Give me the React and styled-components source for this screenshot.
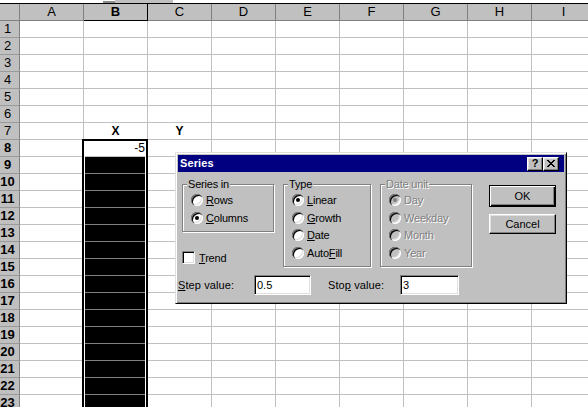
import React from 'react';
import styled, { createGlobalStyle } from 'styled-components';

const GlobalStyle = createGlobalStyle`
  html, body { margin: 0; padding: 0; background: #fff; }
  body { width: 588px; height: 407px; overflow: hidden; font-family: "Liberation Sans", Arial, sans-serif; }
`;

const SANS = '"Liberation Sans", Arial, sans-serif';

const Screen = styled.div`
  position: relative;
  width: 588px;
  height: 407px;
  overflow: hidden;
  background: #fff;
`;

const TopStrip = styled.div`
  height: 3px;
  border-bottom: 1px solid #000;
  display: flex;
  padding-left: 103px;
`;

const StripTab = styled.div`
  width: 70px;
  height: 3px;
  background: #c0c0c0;
  display: flex;
`;

const StripTabDark = styled.div`
  width: 12px;
  background: #8c8c8c;
  border-top: 1px solid #fff;
  box-sizing: border-box;
`;

const Sheet = styled.div`
  display: flex;
  flex-direction: column;
`;

const Row = styled.div`
  display: flex;
  height: 17px;
`;

const Corner = styled.div`
  flex: 0 0 20px;
  box-sizing: border-box;
  background: #c0c0c0;
  border-right: 1px solid #808080;
  border-bottom: 1px solid #808080;
`;

const ColHeader = styled.div`
  flex: 0 0 64px;
  box-sizing: border-box;
  background: #c0c0c0;
  border-right: 1px solid ${p => (p.$active ? '#000' : '#808080')};
  border-bottom: 1px solid ${p => (p.$active ? '#000' : '#808080')};
  font: ${p => (p.$active ? 700 : 400)} 13px/16px ${SANS};
  text-align: center;
  color: #000;
`;

const RowHeader = styled.div`
  flex: 0 0 20px;
  box-sizing: border-box;
  background: #c0c0c0;
  border-right: 1px solid #808080;
  border-bottom: 1px solid #9a9a9a;
  padding-right: 4px;
  font: ${p => (p.$active ? 700 : 400)} 13px/16px ${SANS};
  text-align: center;
  color: #000;
  overflow: visible;
  white-space: nowrap;
`;

const Cell = styled.div`
  flex: 0 0 64px;
  box-sizing: border-box;
  border-right: 1px solid #c0c0c0;
  border-bottom: 1px solid ${p => (p.$filled ? '#808080' : '#c0c0c0')};
  background: ${p => (p.$filled ? '#000' : '#fff')};
  font: ${p => (p.$bold ? 700 : 400)} 12px/16px ${SANS};
  text-align: ${p => p.$align || 'left'};
  padding: 0 2px;
  color: #000;
  white-space: nowrap;
`;

const Selection = styled.div`
  position: absolute;
  left: 82px;
  top: 139px;
  width: 66px;
  height: 300px;
  box-sizing: border-box;
  border: 2px solid #000;
  box-shadow: inset 0 0 0 1px #fff;
  pointer-events: none;
`;

/* ---------- Dialog ---------- */

const Dialog = styled.div`
  position: absolute;
  left: 175px;
  top: 152px;
  width: 392px;
  height: 152px;
  box-sizing: border-box;
  background: #c0c0c0;
  border: 1px solid;
  border-color: #dfdfdf #000 #000 #dfdfdf;
  box-shadow: inset 1px 1px 0 #fff, inset -1px -1px 0 #808080;
  padding: 2px;
  display: flex;
  flex-direction: column;
  font-family: ${SANS};
  font-size: 11px;
  letter-spacing: -0.2px;
  color: #000;
`;

const TitleBar = styled.div`
  height: 17px;
  flex: 0 0 17px;
  background: #000080;
  display: flex;
  align-items: center;
  padding: 0 5px 0 2px;
`;

const Title = styled.span`
  color: #fff;
  font: 700 11px/13px ${SANS};
  letter-spacing: 0.1px;
`;

const CaptionButtons = styled.div`
  margin-left: auto;
  display: flex;
`;

const CaptionButton = styled.div`
  width: 16px;
  height: 14px;
  box-sizing: border-box;
  background: #c0c0c0;
  border: 1px solid;
  border-color: #fff #000 #000 #fff;
  box-shadow: inset -1px -1px 0 #808080, inset 1px 1px 0 #dfdfdf;
  display: flex;
  align-items: center;
  justify-content: center;
  font: 700 11px/11px ${SANS};
  letter-spacing: 0;
  color: #000;
`;

const Body = styled.div`
  display: flex;
  flex-direction: column;
  padding-top: 6px;
`;

const TopArea = styled.div`
  display: flex;
  align-items: flex-start;
  gap: 9px;
  padding-left: 4px;
`;

const LeftCol = styled.div`
  display: flex;
  flex-direction: column;
`;

const Group = styled.fieldset`
  margin: 0;
  padding: 0;
  min-width: 0;
  width: ${p => p.$w}px;
  height: ${p => p.$h}px;
  box-sizing: border-box;
  border: 1px solid #808080;
  box-shadow: 1px 1px 0 #fff, inset 1px 1px 0 #fff;
`;

const Legend = styled.legend`
  margin-left: 4px;
  padding: 0 1px;
  line-height: 12px;
  background: #c0c0c0;
  color: ${p => (p.$disabled ? '#808080' : '#000')};
  text-shadow: ${p => (p.$disabled ? '1px 1px 0 #fff' : 'none')};
`;

const RadioList = styled.div`
  display: flex;
  flex-direction: column;
  padding: 1.5px 0 0 8px;
`;

const RadioRow = styled.div`
  height: 17.5px;
  display: flex;
  align-items: center;
  gap: 3px;
  color: ${p => (p.$disabled ? '#808080' : '#000')};
  text-shadow: ${p => (p.$disabled ? '1px 1px 0 #fff' : 'none')};
`;

const RadioDot = styled.span`
  position: relative;
  flex: 0 0 12px;
  width: 12px;
  height: 12px;
  border-radius: 50%;
  background: ${p => (p.$disabled ? '#c0c0c0' : '#fff')};
  box-shadow: inset 1px 1px 0 #808080, inset 2px 2px 0 #000, inset -1px -1px 0 #fff,
    inset -2px -2px 0 #dfdfdf;
  &::after {
    content: '';
    display: ${p => (p.$checked ? 'block' : 'none')};
    position: absolute;
    left: 4px;
    top: 4px;
    width: 4px;
    height: 4px;
    border-radius: 50%;
    background: ${p => (p.$disabled ? '#808080' : '#000')};
  }
`;

const Key = styled.span`
  text-decoration: underline;
  text-underline-offset: 1px;
`;

const CheckRow = styled.div`
  margin-top: 19px;
  height: 13px;
  display: flex;
  align-items: center;
  gap: 4px;
`;

const CheckBox = styled.span`
  flex: 0 0 13px;
  width: 13px;
  height: 13px;
  box-sizing: border-box;
  background: #fff;
  border: 1px solid;
  border-color: #808080 #fff #fff #808080;
  box-shadow: inset 1px 1px 0 #000, inset -1px -1px 0 #dfdfdf;
`;

const ButtonCol = styled.div`
  margin-left: 8px;
  padding-top: 7px;
  display: flex;
  flex-direction: column;
  gap: 7px;
`;

const Button = styled.div`
  width: 67px;
  height: ${p => (p.$default ? 22 : 20)}px;
  box-sizing: border-box;
  background: #c0c0c0;
  border: 1px solid;
  border-color: ${p => (p.$default ? '#000' : '#fff #000 #000 #fff')};
  box-shadow: ${p =>
    p.$default
      ? 'inset 1px 1px 0 #fff, inset -1px -1px 0 #000, inset -2px -2px 0 #808080'
      : 'inset -1px -1px 0 #808080, inset 1px 1px 0 #dfdfdf'};
  display: flex;
  align-items: center;
  justify-content: center;
  letter-spacing: 0;
`;

const BottomRow = styled.div`
  margin-top: 8px;
  display: flex;
  align-items: center;
  gap: 17px;
`;

const Field = styled.div`
  display: flex;
  align-items: center;
`;

const FieldLabel = styled.span`
  width: ${p => p.$w}px;
  line-height: 13px;
  letter-spacing: 0.1px;
`;

const TextBox = styled.div`
  width: ${p => p.$w}px;
  height: 20px;
  box-sizing: border-box;
  background: #fff;
  border: 1px solid;
  border-color: #808080 #fff #fff #808080;
  box-shadow: inset 1px 1px 0 #000, inset -1px -1px 0 #dfdfdf;
  padding: 0 0 0 2px;
  display: flex;
  align-items: center;
  letter-spacing: 0;
`;

const CloseGlyph = () => (
  <svg width="8" height="7" viewBox="0 0 8 7" shapeRendering="crispEdges">
    <path
      fill="#000"
      d="M0 0h2v1H0zM6 0h2v1H6zM1 1h2v1H1zM5 1h2v1H5zM2 2h4v1H2zM3 3h2v1H3zM2 4h4v1H2zM1 5h2v1H1zM5 5h2v1H5zM0 6h2v1H0zM6 6h2v1H6z"
    />
  </svg>
);

const Radio = ({ checked, disabled, children }) => (
  <RadioRow $disabled={disabled}>
    <RadioDot $checked={checked} $disabled={disabled} />
    <span>{children}</span>
  </RadioRow>
);

const COLS = ['A', 'B', 'C', 'D', 'E', 'F', 'G', 'H', 'I'];
const ROWS = Array.from({ length: 23 }, (_, i) => i + 1);

const cellProps = (r, c) => {
  if (r === 7 && c === 'B') return { text: 'X', bold: true, align: 'center' };
  if (r === 7 && c === 'C') return { text: 'Y', bold: true, align: 'center' };
  if (r === 8 && c === 'B') return { text: '-5', align: 'right' };
  if (r > 8 && c === 'B') return { filled: true };
  return {};
};

export default function App() {
  return (
    <Screen>
      <GlobalStyle />
      <TopStrip>
        <StripTab>
          <StripTabDark />
        </StripTab>
      </TopStrip>
      <Sheet>
        <Row>
          <Corner />
          {COLS.map(c => (
            <ColHeader key={c} $active={c === 'B'}>
              {c}
            </ColHeader>
          ))}
        </Row>
        {ROWS.map(r => (
          <Row key={r}>
            <RowHeader $active={r >= 8}>{r}</RowHeader>
            {COLS.map(c => {
              const p = cellProps(r, c);
              return (
                <Cell key={c} $filled={p.filled} $bold={p.bold} $align={p.align}>
                  {p.text}
                </Cell>
              );
            })}
          </Row>
        ))}
      </Sheet>
      <Selection />

      <Dialog>
        <TitleBar>
          <Title>Series</Title>
          <CaptionButtons>
            <CaptionButton>?</CaptionButton>
            <CaptionButton>
              <CloseGlyph />
            </CaptionButton>
          </CaptionButtons>
        </TitleBar>
        <Body>
          <TopArea>
            <LeftCol>
              <Group $w={92} $h={54}>
                <Legend>Series in</Legend>
                <RadioList>
                  <Radio>
                    <Key>R</Key>ows
                  </Radio>
                  <Radio checked>
                    <Key>C</Key>olumns
                  </Radio>
                </RadioList>
              </Group>
              <CheckRow>
                <CheckBox />
                <span>
                  <Key>T</Key>rend
                </span>
              </CheckRow>
            </LeftCol>
            <Group $w={88} $h={89}>
              <Legend>Type</Legend>
              <RadioList>
                <Radio checked>
                  <Key>L</Key>inear
                </Radio>
                <Radio>
                  <Key>G</Key>rowth
                </Radio>
                <Radio>
                  <Key>D</Key>ate
                </Radio>
                <Radio>
                  Auto<Key>F</Key>ill
                </Radio>
              </RadioList>
            </Group>
            <Group $w={92} $h={89}>
              <Legend $disabled>Date unit</Legend>
              <RadioList>
                <Radio checked disabled>
                  Day
                </Radio>
                <Radio disabled>Weekday</Radio>
                <Radio disabled>Month</Radio>
                <Radio disabled>Year</Radio>
              </RadioList>
            </Group>
            <ButtonCol>
              <Button $default>OK</Button>
              <Button>Cancel</Button>
            </ButtonCol>
          </TopArea>
          <BottomRow>
            <Field>
              <FieldLabel $w={76}>
                <Key>S</Key>tep value:
              </FieldLabel>
              <TextBox $w={57}>0.5</TextBox>
            </Field>
            <Field>
              <FieldLabel $w={72}>
                Sto<Key>p</Key> value:
              </FieldLabel>
              <TextBox $w={59}>3</TextBox>
            </Field>
          </BottomRow>
        </Body>
      </Dialog>
    </Screen>
  );
}
